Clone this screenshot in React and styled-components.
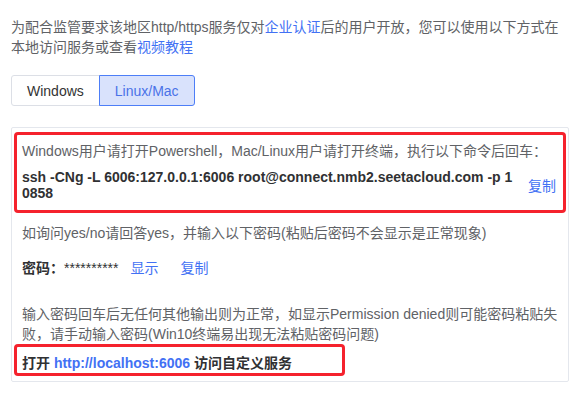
import React, { useState } from 'react';
import styled, { createGlobalStyle } from 'styled-components';

const GlobalStyle = createGlobalStyle`
  html, body {
    margin: 0;
    padding: 0;
    background: #fff;
  }
  body {
    font-family: "Liberation Sans", "Noto Sans CJK SC", sans-serif;
    font-size: 14px;
    color: #606266;
  }
`;

const Page = styled.div`
  padding: 17px 11px 0 11px;
`;

const Notice = styled.p`
  margin: 0;
  line-height: 20px;
`;

const Link = styled.a`
  color: #4271f4;
  text-decoration: none;
  cursor: pointer;
  font-weight: ${props => (props.bold ? 'bold' : 'normal')};
  margin-left: ${props => props.gap || 0}px;
`;

const Tabs = styled.div`
  display: flex;
  margin-top: 18px;
`;

const Tab = styled.button`
  height: 31px;
  padding: 0 15px;
  font-family: inherit;
  font-size: 14px;
  cursor: pointer;
  border: 1px solid ${props => (props.active ? '#4d7ef7' : '#dcdfe6')};
  background: ${props => (props.active ? '#d9e2fc' : '#fff')};
  color: ${props => (props.active ? '#4a72e8' : '#333')};
  margin-left: ${props => (props.first ? 0 : -1)}px;
  position: relative;
  z-index: ${props => (props.active ? 1 : 0)};
  border-radius: ${props => (props.first ? '3px 0 0 3px' : '0 3px 3px 0')};
`;

const Panel = styled.div`
  margin-top: 21px;
  width: 558px;
  box-sizing: border-box;
  border: 1px solid #e4e7ed;
  border-radius: 2px;
  padding: 4px 2px 5px 2px;
`;

const Marked = styled.div`
  border: 3px solid #f5222d;
  border-radius: 4px;
  padding: ${props => props.pad};
  width: ${props => props.width || 'auto'};
  box-sizing: border-box;
`;

const Line = styled.div`
  line-height: ${props => props.lh || 20}px;
  padding: ${props => props.pad || '0 8px'};
  margin-top: ${props => props.top || 0}px;
`;

const CommandRow = styled.div`
  display: flex;
  align-items: center;
  margin-top: 8px;
`;

const Command = styled.div`
  width: 495px;
  font-weight: bold;
  color: #303133;
  line-height: 16px;
  word-break: break-all;
`;

const Spacer = styled.div`
  flex: 1;
`;

const Strong = styled.span`
  font-weight: bold;
  color: #303133;
`;

const Secret = styled.span`
  color: #303133;
`;

export default function App() {
  const [tab, setTab] = useState('linux');
  const [show, setShow] = useState(false);

  return (
    <Page>
      <GlobalStyle />
      <Notice>
        为配合监管要求该地区http/https服务仅对<Link>企业认证</Link>后的用户开放，您可以使用以下方式在本地访问服务或查看<Link>视频教程</Link>
      </Notice>

      <Tabs>
        <Tab first active={tab === 'windows'} onClick={() => setTab('windows')}>Windows</Tab>
        <Tab active={tab === 'linux'} onClick={() => setTab('linux')}>Linux/Mac</Tab>
      </Tabs>

      <Panel>
        <Marked pad="6px 7px 9px 5px">
          <Line pad="0">Windows用户请打开Powershell，Mac/Linux用户请打开终端，执行以下命令后回车：</Line>
          <CommandRow>
            <Command>ssh -CNg -L 6006:127.0.0.1:6006 root@connect.nmb2.seetacloud.com -p 10858</Command>
            <Spacer />
            <Link>复制</Link>
          </CommandRow>
        </Marked>

        <Line top={10}>如询问yes/no请回答yes，并输入以下密码(粘贴后密码不会显示是正常现象)</Line>
        <Line top={15}>
          <Strong>密码：</Strong>
          <Secret>{show ? 'Xk82pQz7Lm' : '**********'}</Secret>
          <Link gap={12} onClick={() => setShow(!show)}>显示</Link>
          <Link gap={22}>复制</Link>
        </Line>

        <Line top={26}>
          输入密码回车后无任何其他输出则为正常，如显示Permission denied则可能密码粘贴失败，请手动输入密码(Win10终端易出现无法粘贴密码问题)
        </Line>

        <Marked pad="7px 5px 1px 5px" width="331px">
          <Line pad="0" lh={18}>
            <Strong>打开 </Strong>
            <Link bold>http://localhost:6006</Link>
            <Strong> 访问自定义服务</Strong>
          </Line>
        </Marked>
      </Panel>
    </Page>
  );
}
